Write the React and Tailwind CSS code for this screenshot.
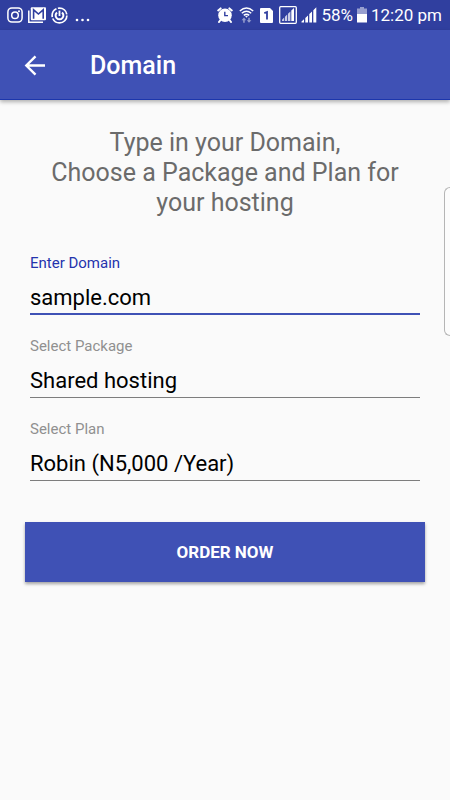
import { useState } from 'react';

const packages = ['Shared hosting', 'Reseller hosting', 'VPS hosting'];
const plans = ['Robin (N5,000 /Year)', 'Eagle (N10,000 /Year)', 'Falcon (N20,000 /Year)'];

function InstagramIcon() {
  return (
    <svg width="16" height="16" viewBox="0 0 16 16" fill="none" stroke="#fff" strokeWidth="1.5">
      <rect x="0.9" y="0.9" width="14.2" height="14.2" rx="4" />
      <circle cx="8" cy="8.3" r="3.3" />
      <circle cx="12" cy="4.2" r="1" fill="#fff" stroke="none" />
    </svg>
  );
}

function MailIcon() {
  return (
    <svg width="18" height="16" viewBox="0 0 18 16">
      <path d="M0.8 3.5V15.2H15" fill="none" stroke="#fff" strokeWidth="1.5" />
      <rect x="2.8" y="0.3" width="15.2" height="13" rx="1" fill="#fff" />
      <path d="M5.6 11.7V2.8L10.4 7L15.2 2.8V11.7" fill="none" stroke="#303f9f" strokeWidth="1.6" />
    </svg>
  );
}

function CleanerIcon() {
  return (
    <svg width="17" height="17" viewBox="0 0 17 17" fill="none" stroke="#fff">
      <circle cx="8.5" cy="8.5" r="7.4" strokeWidth="1.7" strokeDasharray="20 1.5 10 1.5 12 1.5" />
      <path d="M6 5.4A3.9 3.9 0 1 0 11 5.4" strokeWidth="2" />
      <path d="M8.5 3.6V9" strokeWidth="1.8" />
    </svg>
  );
}

function AlarmIcon() {
  return (
    <svg width="16" height="16" viewBox="0 0 16 16">
      <path d="M1.2 3.4L3.6 1.4M14.8 3.4L12.4 1.4M3.5 13L2 15M12.5 13L14 15" stroke="#fff" strokeWidth="2" strokeLinecap="round" />
      <circle cx="8" cy="8.2" r="6.8" fill="#fff" />
      <path d="M7.8 4.8V8.6H11" fill="none" stroke="#303f9f" strokeWidth="1.4" />
    </svg>
  );
}

function WifiIcon() {
  return (
    <svg width="15" height="16" viewBox="0 0 15 16" fill="none" stroke="#fff" strokeWidth="1.5">
      <path d="M0.8 4Q7.5 -2 14.2 4M2.8 6.3Q7.5 2.2 12.2 6.3M4.8 8.4Q7.5 6.2 10.2 8.4" />
      <path d="M5.9 8.8L7.5 10.8L9.1 8.8Z" fill="#fff" stroke="none" />
      <g fill="#fff" stroke="none" opacity="0.5">
        <path d="M2.6 13.2L5 10.6L7.2 13.2H5.7V15.8H4.2V13.2Z" />
        <path d="M7.8 13.2H9.3V10.8H10.8V13.2H12.4L10 15.8Z" />
      </g>
    </svg>
  );
}

function SimIcon() {
  return (
    <svg width="13" height="15" viewBox="0 0 13 15">
      <path d="M1 0H10L13 3V14Q13 15 12 15H1Q0 15 0 14V1Q0 0 1 0Z" fill="#fff" />
      <path d="M4.3 5.2L7 4.1V11.5" fill="none" stroke="#303f9f" strokeWidth="1.8" />
    </svg>
  );
}

function BoxedSignalIcon() {
  return (
    <svg width="18" height="18" viewBox="0 0 18 18">
      <rect x="0.7" y="0.7" width="16.6" height="16.6" rx="1" fill="none" stroke="#fff" strokeWidth="1.3" />
      <path d="M3 15V13.8L5.2 11.6V15ZM6 15V10.8L8.2 8.6V15ZM9 15V7.8L11.4 5.4V15Z" fill="#fff" opacity="0.75" />
      <path d="M12.3 15V4.6L15 2V15Z" fill="#fff" />
    </svg>
  );
}

function SignalIcon() {
  return (
    <svg width="16" height="16" viewBox="0 0 16 16" fill="#fff">
      <path d="M0.5 15.5V14.6L3 12.2V15.5ZM4.3 15.5V11L7 8.4V15.5ZM8.3 15.5V7.1L11 4.5V15.5ZM12.3 15.5V3.2L15.3 0.3V15.5Z" />
    </svg>
  );
}

function BatteryIcon() {
  return (
    <svg width="10" height="16" viewBox="0 0 10 16" fill="#fff">
      <path d="M0 1.5H3V0H7V1.5H10V7H0Z" opacity="0.5" />
      <path d="M0 7H10V15.5H0Z" />
    </svg>
  );
}

function StatusBar() {
  return (
    <div className="flex h-[30px] items-center justify-between bg-[#303f9f] pr-2 pl-[7px] text-white">
      <div className="flex items-center gap-[5px]">
        <InstagramIcon />
        <MailIcon />
        <CleanerIcon />
        <svg width="20" height="16" viewBox="0 0 20 16" fill="#fff">
          <circle cx="4" cy="13" r="1.3" />
          <circle cx="9.5" cy="13" r="1.3" />
          <circle cx="15" cy="13" r="1.3" />
        </svg>
      </div>
      <div className="flex items-center gap-1">
        <div className="flex items-center gap-1.5">
          <AlarmIcon />
          <WifiIcon />
          <SimIcon />
          <BoxedSignalIcon />
        </div>
        <SignalIcon />
        <div className="flex items-center gap-1 text-[17px] leading-5">
          <span>58%</span>
          <BatteryIcon />
          <span>12:20 pm</span>
        </div>
      </div>
    </div>
  );
}

function SelectField({ id, label, value, options, onChange }) {
  return (
    <div className="flex flex-col">
      <label htmlFor={id} className="text-[15px] leading-5 text-[#909090]">{label}</label>
      <select id={id} value={value} onChange={(e) => onChange(e.target.value)}
        className="h-[42px] w-full appearance-none border-b border-[#7d7d7d] bg-transparent pt-2 text-[22px] leading-7 text-black outline-none">
        {options.map((o) => <option key={o} value={o}>{o}</option>)}
      </select>
    </div>
  );
}

export default function App() {
  const [domain, setDomain] = useState('sample.com');
  const [pkg, setPkg] = useState(packages[0]);
  const [plan, setPlan] = useState(plans[0]);

  return (
    <div className="relative flex min-h-screen flex-col bg-[#fafafa] font-[Roboto,sans-serif]">
      <StatusBar />
      <header className="flex h-[70px] items-center gap-11 border-b border-[#1c36ac] bg-[#3f51b5] px-6 pt-0.5 text-white shadow-[0_2px_4px_rgba(0,0,0,0.3)]">
        <button type="button" aria-label="Back">
          <svg width="22" height="22" viewBox="0 0 22 22" fill="none" stroke="#fff" strokeWidth="2.4">
            <path d="M21 10.5H3M11.5 1.3L2.3 10.5L11.5 19.7" />
          </svg>
        </button>
        <h1 className="text-[25px] leading-8 font-medium">Domain</h1>
      </header>

      <main className="px-[25px] pt-7">
        <p className="text-center text-[25px] leading-[30px] text-[#6b6b6b]">
          Type in your Domain,<br />
          Choose a Package and Plan for your hosting
        </p>

        <form onSubmit={(e) => e.preventDefault()}>
          <div className="flex flex-col gap-[21px] px-[5px] pt-[35px]">
            <div className="flex flex-col">
              <label htmlFor="domain" className="text-[15px] leading-5 text-[#2433ad]">Enter Domain</label>
              <input id="domain" type="text" value={domain} onChange={(e) => setDomain(e.target.value)}
                className="h-[42px] w-full border-b-2 border-[#3f51b5] bg-transparent pt-2 text-[22px] leading-7 text-black outline-none" />
            </div>
            <SelectField id="package" label="Select Package" value={pkg} options={packages} onChange={setPkg} />
            <SelectField id="plan" label="Select Plan" value={plan} options={plans} onChange={setPlan} />
          </div>
          <button type="submit" className="mt-[41px] h-[60px] w-full bg-[#3f51b5] pt-0.5 text-[17px] font-bold text-white shadow-[0_2px_3px_rgba(0,0,0,0.35)]">
            ORDER NOW
          </button>
        </form>
      </main>

      {/* Edge panel handle */}
      <div className="absolute top-[187px] right-0 h-[149px] w-1.5 rounded-l-md border border-r-0 border-[#b5b5b5] bg-[#fcfcfc]" />
    </div>
  );
}
